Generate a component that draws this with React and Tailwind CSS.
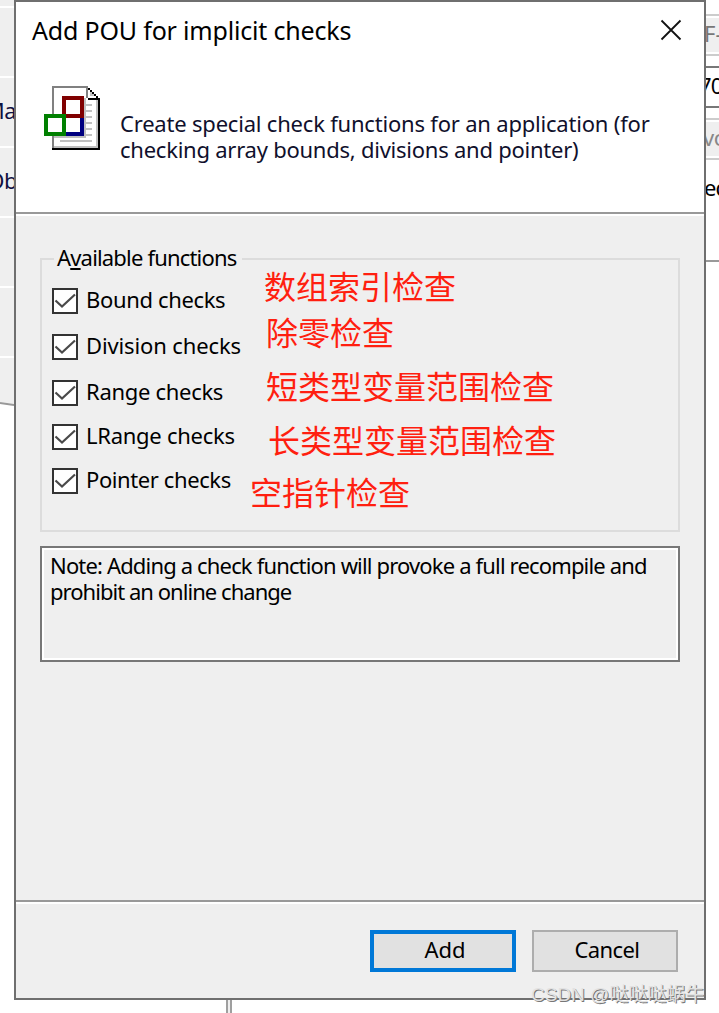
import React, { useState } from 'react';

const checks = [
  { id: 'bound', label: 'Bound checks', row: 'mb-5', text: 'tracking-[-0.35px]' },
  { id: 'division', label: 'Division checks', row: 'mb-5', text: 'tracking-[-0.12px]' },
  { id: 'range', label: 'Range checks', row: 'mb-[18px]', text: 'tracking-[-0.3px]' },
  { id: 'lrange', label: 'LRange checks', row: 'mb-[18px]', text: 'tracking-[-0.27px]' },
  { id: 'pointer', label: 'Pointer checks', row: '', text: 'tracking-[-0.4px]' },
];

// handwritten remarks placed freely over the dialog
const notes = [
  { text: '数组索引检查', pos: 'left-[264px] top-[269px]' },
  { text: '除零检查', pos: 'left-[266px] top-[315px]' },
  { text: '短类型变量范围检查', pos: 'left-[266px] top-[369px]' },
  { text: '长类型变量范围检查', pos: 'left-[268px] top-[423px]' },
  { text: '空指针检查', pos: 'left-[250px] top-[475px]' },
];

const PouIcon = () => (
  <svg width="56" height="64" viewBox="0 0 56 64" shapeRendering="crispEdges" className="shrink-0">
    <path d="M8 0H44L56 12V64H8Z" fill="#fff" />
    <path d="M52 14V60H10V62H54V14Z" fill="#c0c0c0" />
    <path d="M8 0H44V2H10V62H8ZM42 2H44V12H42Z" fill="#808080" />
    <path d="M44 2h2v2h2v2h2v2h2v2h2v2h2v52H8v-2h46V14H44v-2h8v-2h-2v-2h-2v-2h-2v-2h-2Z" fill="#000" />
    <path d="M46 6h2v2h2v2h-2v-2h-2ZM46 8h2v2h-2Z" fill="#c0c0c0" />
    <path d="M40 18h8v2h-8ZM40 24h8v2h-8ZM40 30h8v2h-8ZM40 36h8v2h-8ZM40 42h8v2h-8ZM40 48h8v2h-8ZM16 54h32v2H16Z" fill="#c0c0c0" />
    <path d="M40 12h2v40H10v-2h30Z" fill="#c0c0c0" />
    <rect x="20" y="30" width="18" height="18" fill="#fff" stroke="#000080" strokeWidth="4" />
    <rect x="20" y="12" width="18" height="18" fill="#fff" stroke="#800000" strokeWidth="4" />
    <rect x="2" y="30" width="18" height="18" fill="#fff" stroke="#008000" strokeWidth="4" />
  </svg>
);

const CheckRow = ({ item, checked, onToggle }) => (
  <label className={`flex h-[26px] items-center ${item.row}`}>
    <input type="checkbox" checked={checked} onChange={onToggle} className="sr-only" />
    <span className="h-[26px] w-[26px] shrink-0 border-2 border-[#333] bg-white">
      {checked && (
        <svg width="22" height="22" viewBox="0 0 22 22" fill="none" stroke="#4a4a4a" strokeWidth="2.2">
          <path d="M1.5 10.5L8 16.5L21 4.5" />
        </svg>
      )}
    </span>
    <span className={`mb-1 ml-2 whitespace-nowrap text-[22px] leading-[26px] ${item.text}`}>{item.label}</span>
  </label>
);

const LeftStrip = () => (
  <div className="h-[1000px] w-[14px] shrink-0 overflow-hidden text-[22px] leading-[26px] text-[#101040]">
    <div className="h-2 border-b-2 border-white bg-[#efefef]" />
    <div className="h-[70px] border-b-2 border-white bg-[#efefef]" />
    <div className="flex h-[70px] items-center justify-end border-b-2 border-white bg-[#efefef] pb-[5px]">
      <span className="-mr-[2px] tracking-[-0.5px]">Ma</span>
    </div>
    <div className="flex h-[70px] items-center justify-end border-b-2 border-white bg-[#efefef] pb-[5px]">
      <span className="-mr-[3px] tracking-[-0.5px]">Ob</span>
    </div>
    <div className="h-[70px] border-b-2 border-white bg-[#efefef]" />
    <div className="h-[70px] border-b-2 border-white bg-[#efefef]" />
    <svg width="14" height="50" viewBox="0 0 14 50" className="block">
      <path d="M0 0H14V46L0 44Z" fill="#efefef" />
      <path d="M0 45L14 47" stroke="#999" strokeWidth="2" />
    </svg>
  </div>
);

const RightStrip = () => (
  <div className="h-[1000px] w-[13px] shrink-0 overflow-hidden whitespace-nowrap text-[22px]">
    <div className="mt-[14px] h-[42px] border-y-2 border-[#ccc] py-[2px]">
      <div className="h-[34px] bg-[#efefef] leading-[31px] text-[#777]">
        <span className="-ml-[2px]">F-</span>
      </div>
    </div>
    <div className="mt-[10px] h-[42px] border-y-2 border-[#777] leading-[35px]">
      <span className="-ml-[7px] tracking-[-0.8px]">70</span>
    </div>
    <div className="mt-[10px] h-[42px] border-y-2 border-[#ccc] py-[2px]">
      <div className="h-[34px] bg-[#efefef] leading-[31px] text-[#888]">
        <span className="-ml-[3px] tracking-[-0.5px]">vo</span>
      </div>
    </div>
    <div className="mt-[10px] h-[92px] border-b-2 border-[#999] pt-[4px] leading-[26px]">
      <span className="-ml-[2px] tracking-[-0.8px]">ed</span>
    </div>
  </div>
);

const App = () => {
  const [state, setState] = useState({ bound: true, division: true, range: true, lrange: true, pointer: true });

  const toggle = (id) => setState((prev) => ({ ...prev, [id]: !prev[id] }));

  return (
    <div className="relative h-[1013px] w-[719px] overflow-hidden bg-white font-['Noto_Sans','Noto_Sans_CJK_SC',sans-serif] text-black">
      <div className="flex">
        <LeftStrip />
        <div className="flex h-[1000px] w-[692px] shrink-0 flex-col border-2 border-[#6f6f6f] bg-[#efefef]">
          <header className="h-[214px] shrink-0 border-b-2 border-white">
            <div className="h-[212px] border-b-2 border-[#999] bg-white">
              <div className="flex h-[56px] items-center justify-between pr-[22px] pl-4">
                <h1 className="whitespace-nowrap text-[25px] leading-[34px] tracking-[-0.18px]">Add POU for implicit checks</h1>
                <button type="button" aria-label="Close">
                  <svg width="22" height="22" viewBox="0 0 22 22" stroke="#111" strokeWidth="1.8" className="block">
                    <path d="M1.5 1.5L20.5 20.5M20.5 1.5L1.5 20.5" />
                  </svg>
                </button>
              </div>
              <div className="flex pt-[28px] pl-[28px]">
                <PouIcon />
                <p className="mt-[24px] ml-[20px] whitespace-nowrap text-[22px] leading-[26px] tracking-[-0.2px] text-[#10102c]">
                  Create special check functions for an application (for
                  <br />
                  <span className="tracking-[-0.24px]">checking array bounds, divisions and pointer)</span>
                </p>
              </div>
            </div>
          </header>

          <main className="flex h-[684px] shrink-0 flex-col px-6 pt-[42px]">
            <section className="h-[274px] shrink-0 border-2 border-[#dcdcdc] px-[10px]">
              <h2 className="-mt-[17px] ml-[2px] h-[28px] w-[188px] whitespace-nowrap bg-[#efefef] pl-[3px] text-[22px] leading-[28px] tracking-[-0.82px]">
                A<span className="underline decoration-2 underline-offset-2">v</span>ailable functions
              </h2>
              <div className="pt-[17px]">
                {checks.map((item) => (
                  <CheckRow key={item.id} item={item} checked={state[item.id]} onToggle={() => toggle(item.id)} />
                ))}
              </div>
            </section>

            <div className="mt-[14px] h-[116px] shrink-0 border-2 border-[#777]">
              <p className="h-full whitespace-nowrap border-2 border-white pt-[2px] pl-[6px] text-[22px] leading-[26px] tracking-[-0.84px]">
                Note: Adding a check function will provoke a full recompile and
                <br />
                <span className="tracking-[-0.96px]">prohibit an online change</span>
              </p>
            </div>
          </main>

          <footer className="flex-1 border-t-2 border-[#999]">
            <div className="flex justify-end gap-4 border-t-2 border-white pt-[26px] pr-[26px] text-[22px]">
              <button type="button" className="h-[42px] w-[146px] border-4 border-[#0078d7] bg-[#e1e1e1] pb-1 pl-1 leading-[30px]">
                Add
              </button>
              <button type="button" className="h-[42px] w-[146px] border-2 border-[#adadad] bg-[#e1e1e1] pb-1 pl-1 leading-[34px] tracking-[-0.6px]">
                Cancel
              </button>
            </div>
          </footer>
        </div>
        <RightStrip />
      </div>

      <div className="ml-[226px] h-[13px] w-[6px] border-x-2 border-[#9f9f9f] bg-[#efefef]" />

      {notes.map((note) => (
        <span key={note.text} className={`absolute whitespace-nowrap font-['Noto_Sans_CJK_SC',sans-serif] text-[32px] leading-[32px] text-[#ff1f10] ${note.pos}`}>
          {note.text}
        </span>
      ))}

      <span className="absolute top-[983px] left-[531px] whitespace-nowrap font-['Liberation_Sans','Noto_Sans_CJK_SC',sans-serif] text-[19px] leading-[24px] text-[#e2e2e2] [text-shadow:1px_1px_0_#777]">
        CSDN @哒哒哒蜗牛
      </span>
    </div>
  );
};

export default App;
